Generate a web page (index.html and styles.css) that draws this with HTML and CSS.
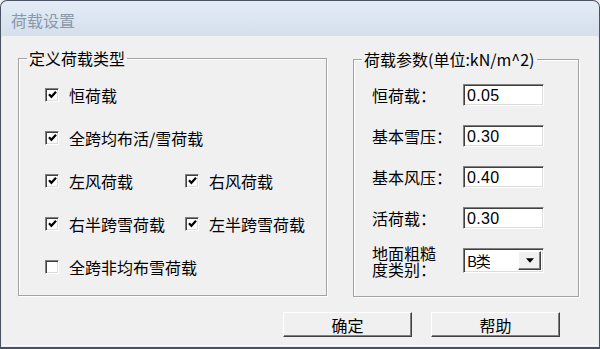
FILE: index.html
```html
<!doctype html>
<html>
 <head>
  <meta charset="utf-8">
  <title>荷载设置</title>
  <link rel="stylesheet" href="styles.css">
 </head>
 <body>
  <div class="window">
   <div class="titlebar">荷载设置</div>
   <div class="client">
    <div class="groups">
     <fieldset class="group types">
      <legend>定义荷载类型</legend>
      <div class="checks">
       <label class="check wide"><span class="box"><svg viewBox="0 0 9 9"><path d="M1 4.2 L3.4 6.8 L8 1.8"/></svg></span>恒荷载</label>
       <label class="check wide"><span class="box"><svg viewBox="0 0 9 9"><path d="M1 4.2 L3.4 6.8 L8 1.8"/></svg></span>全跨均布活/雪荷载</label>
       <label class="check"><span class="box"><svg viewBox="0 0 9 9"><path d="M1 4.2 L3.4 6.8 L8 1.8"/></svg></span>左风荷载</label>
       <label class="check"><span class="box"><svg viewBox="0 0 9 9"><path d="M1 4.2 L3.4 6.8 L8 1.8"/></svg></span>右风荷载</label>
       <label class="check"><span class="box"><svg viewBox="0 0 9 9"><path d="M1 4.2 L3.4 6.8 L8 1.8"/></svg></span>右半跨雪荷载</label>
       <label class="check"><span class="box"><svg viewBox="0 0 9 9"><path d="M1 4.2 L3.4 6.8 L8 1.8"/></svg></span>左半跨雪荷载</label>
       <label class="check wide"><span class="box"></span>全跨非均布雪荷载</label>
      </div>
     </fieldset>
     <fieldset class="group params">
      <legend>荷载参数(单位:kN/m^2)</legend>
      <div class="fields">
       <span class="name">恒荷载：</span><span class="edit">0.05</span>
       <span class="name">基本雪压：</span><span class="edit">0.30</span>
       <span class="name">基本风压：</span><span class="edit">0.40</span>
       <span class="name">活荷载：</span><span class="edit">0.30</span>
       <span class="name two">地面粗糙<br>度类别：</span>
       <span class="combo"><span class="value">B类</span><span class="drop"><svg viewBox="0 0 7 4"><path d="M0 0 H7 L3.5 4 Z"/></svg></span></span>
      </div>
     </fieldset>
    </div>
    <div class="buttons">
     <button class="btn">确定</button>
     <button class="btn">帮助</button>
    </div>
   </div>
  </div>
 </body>
</html>
```

FILE: styles.css
```css
body{
  margin: 0;
  background: #f0f0f0;
  font-family: "Noto Sans CJK SC", "Liberation Sans", sans-serif;
  color: #000;
}
.window{
  width: 600px;
  height: 349px;
  box-sizing: border-box;
  border: 1px solid #4b5363;
  border-bottom-width: 2px;
  border-radius: 7px 7px 0 0;
  background: linear-gradient(#e4ecf6, #d3dfec 36px, #e8edf3 37px);
  padding: 0 1px 1px 1px;
  display: flex;
  flex-direction: column;
}
.titlebar{
  height: 35px;
  line-height: 38px;
  padding-left: 9px;
  font-size: 16px;
  color: #8b98a8;
}
.client{
  flex: 1;
  background: #f0f0f0;
  border-bottom: 1px solid #fbfbfb;
}
.groups{
  display: flex;
  gap: 26px;
  padding: 13px 0 0 16px;
}
.group{
  margin: 0;
  padding: 0;
  border: 1px solid #a3a3a3;
  box-shadow: inset 1px 1px 0 #fff, 1px 1px 0 #fff;
  box-sizing: border-box;
  height: 247px;
}
.group legend{
  margin-left: 8px;
  padding: 0 2px;
  font-size: 16px;
  line-height: 18px;
}
.types{
  width: 309px;
}
.params{
  width: 226px;
  margin-top: 1px;
}
.checks{
  display: grid;
  grid-template-columns: 140px 1fr;
  grid-auto-rows: 43px;
  padding: 6px 0 0 26px;
}
.check{
  display: flex;
  align-items: center;
  gap: 10px;
  font-size: 16px;
}
.check.wide{
  grid-column: span 2;
}
.box{
  width: 14px;
  height: 14px;
  box-sizing: border-box;
  background: #fff;
  border-top: 1px solid #808080;
  border-left: 1px solid #808080;
  border-right: 1px solid #fff;
  border-bottom: 1px solid #fff;
  box-shadow: inset 1px 1px 0 #404040, inset -1px -1px 0 #dcdcdc;
  display: flex;
  align-items: center;
  justify-content: center;
}
.box svg{
  width: 9px;
  height: 9px;
  fill: none;
  stroke: #000;
  stroke-width: 2.2;
}
.fields{
  display: grid;
  grid-template-columns: 91px 81px;
  grid-template-rows: 22px 22px 22px 22px 25px;
  row-gap: 19px;
  padding: 16px 0 0 18px;
}
.name{
  font-size: 16px;
  align-self: center;
  white-space: nowrap;
}
.name.two{
  line-height: 16px;
  margin-top: 1px;
}
.edit, .combo{
  background: #fff;
  border-top: 1px solid #808080;
  border-left: 1px solid #808080;
  border-right: 1px solid #fff;
  border-bottom: 1px solid #fff;
  box-shadow: inset 1px 1px 0 #404040, inset -1px -1px 0 #dcdcdc;
  font-family: "Liberation Sans", sans-serif;
  font-size: 16px;
  line-height: 22px;
  padding-left: 3px;
  letter-spacing: 0.3px;
}
.combo{
  display: flex;
  align-items: stretch;
  justify-content: space-between;
  padding: 2px 2px 2px 3px;
}
.combo .value{
  font-family: "Noto Sans CJK SC", sans-serif;
  font-size: 15px;
  line-height: 20px;
  letter-spacing: -1px;
}
.drop{
  width: 21px;
  background: #f0f0f0;
  border-top: 1px solid #fff;
  border-left: 1px solid #fff;
  border-right: 1px solid #404040;
  border-bottom: 1px solid #404040;
  box-shadow: inset -1px -1px 0 #808080;
  display: flex;
  align-items: center;
  justify-content: center;
}
.drop svg{
  width: 8px;
  height: 5px;
  fill: #000;
}
.buttons{
  display: flex;
  justify-content: flex-end;
  gap: 19px;
  padding: 15px 38px 0 0;
}
.btn{
  width: 129px;
  height: 25px;
  margin: 0;
  padding: 0;
  background: #f0f0f0;
  border-top: 1px solid #fff;
  border-left: 1px solid #fff;
  border-right: 1px solid #404040;
  border-bottom: 1px solid #404040;
  box-shadow: inset -1px -1px 0 #808080;
  font-family: "Noto Sans CJK SC", sans-serif;
  font-size: 16px;
  line-height: 22px;
  color: #000;
}
```
